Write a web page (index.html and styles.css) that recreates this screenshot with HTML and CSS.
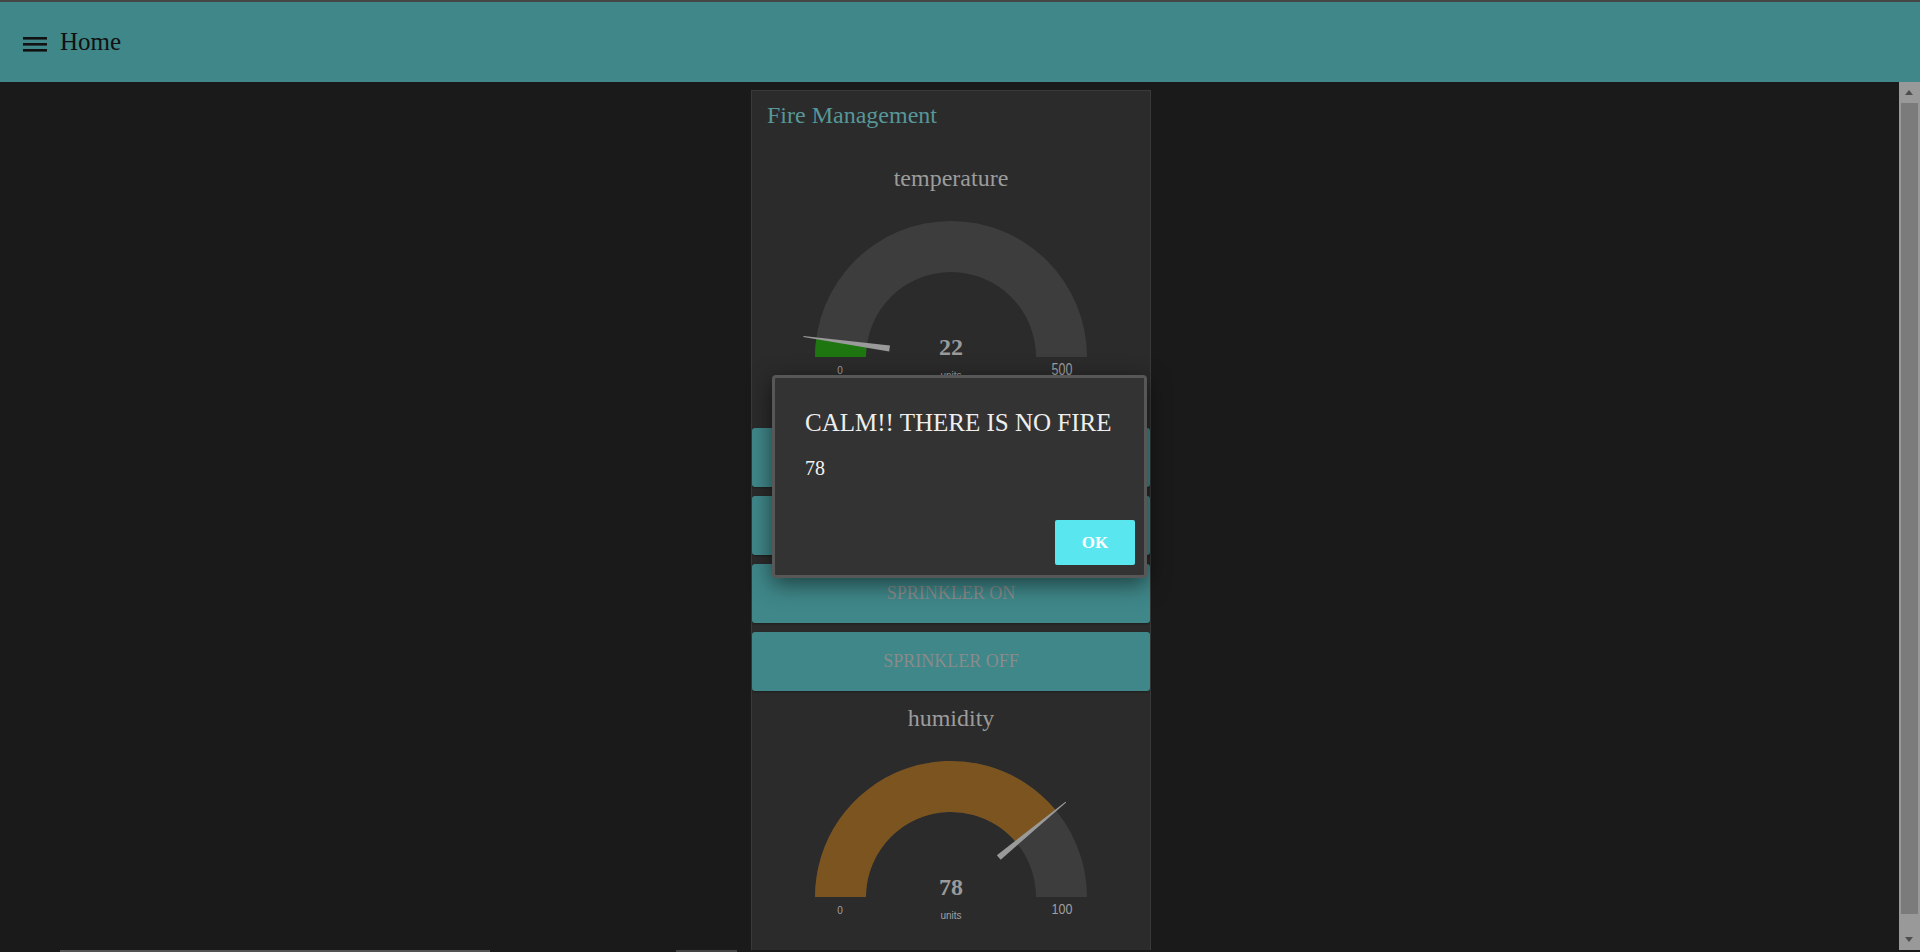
FILE: index.html
```html
<!DOCTYPE html>
<html lang="en">
<head>
<meta charset="utf-8">
<title>Home</title>
<link rel="stylesheet" href="styles.css">
</head>
<body>
<header class="topbar">
  <svg class="menu-icon" width="24" height="15" viewBox="0 0 24 15" aria-hidden="true">
    <rect x="0" y="0" width="24" height="2.6" fill="#111"/>
    <rect x="0" y="6" width="24" height="2.6" fill="#111"/>
    <rect x="0" y="12" width="24" height="2.6" fill="#111"/>
  </svg>
  <span class="topbar-title">Home</span>
</header>

<div class="workspace">
  <main class="content">
    <section class="card">
      <h2 class="card-title">Fire Management</h2>

      <div class="gauge gauge-first">
        <div class="gauge-label">temperature</div>
        <svg class="gauge-svg" width="398" height="235" viewBox="0 0 398 235">
          <path d="M 63 164 A 136 136 0 0 1 335 164 L 284 164 A 85 85 0 0 0 114 164 Z" fill="#3d3d3d"/>
          <path d="M 63 164 A 136 136 0 0 1 64.30 145.26 L 114.81 152.29 A 85 85 0 0 0 114 164 Z" fill="#1d760f"/>
          <path d="M 137.18 158.43 L 138.00 152.49 L 51.49 142.98 L 51.35 143.97 Z" fill="#9a9a9a"/>
          <text class="g-value" x="199" y="162">22</text>
          <text class="g-min" x="88" y="181">0</text>
          <text class="g-max" transform="translate(310 182) scale(1 1.3)">500</text>
          <text class="g-units" x="199" y="186">units</text>
        </svg>
      </div>

      <div class="buttons">
        <div class="btn">BUZZER ON</div>
        <div class="btn">BUZZER OFF</div>
        <div class="btn">SPRINKLER ON</div>
        <div class="btn">SPRINKLER OFF</div>
      </div>

      <div class="gauge gauge-second">
        <div class="gauge-label">humidity</div>
        <svg class="gauge-svg" width="398" height="235" viewBox="0 0 398 235">
          <path d="M 63 164 A 136 136 0 0 1 335 164 L 284 164 A 85 85 0 0 0 114 164 Z" fill="#3d3d3d"/>
          <path d="M 63 164 A 136 136 0 0 1 303.79 77.31 L 264.49 109.82 A 85 85 0 0 0 114 164 Z" fill="#7c5420"/>
          <path d="M 248.68 126.79 L 244.86 122.17 L 313.48 68.64 L 314.12 69.42 Z" fill="#9a9a9a"/>
          <text class="g-value" x="199" y="162">78</text>
          <text class="g-min" x="88" y="181">0</text>
          <text class="g-max" transform="translate(310 181) scale(1 1.15)">100</text>
          <text class="g-units" x="199" y="186">units</text>
        </svg>
      </div>
    </section>
  </main>
  <div class="scrollbar" aria-hidden="true">
    <div class="sb-arrow sb-up"></div>
    <div class="sb-thumb"></div>
    <div class="sb-arrow sb-down"></div>
  </div>
</div>

<div class="bottom-strip" aria-hidden="true">
  <span class="strip-seg seg-a"></span>
  <span class="strip-seg seg-b"></span>
</div>

<div class="dialog" role="dialog">
  <div class="dialog-title">CALM!! THERE IS NO FIRE</div>
  <div class="dialog-msg">78</div>
  <div class="dialog-actions">
    <button class="dialog-ok">OK</button>
  </div>
</div>
</body>
</html>
```

FILE: styles.css
```css
html, body {
  margin: 0;
  padding: 0;
}
body {
  width: 1920px;
  height: 952px;
  overflow: hidden;
  background: #1a1a1a;
  font-family: "Liberation Serif", "Times New Roman", serif;
  display: flex;
  flex-direction: column;
  position: relative;
}

.topbar {
  flex: 0 0 auto;
  height: 80px;
  border-top: 2px solid #474747;
  background: #3f8789;
  display: flex;
  align-items: center;
  padding-left: 23px;
  gap: 13px;
}
.menu-icon {
  display: block;
  margin-top: 4px;
}
.topbar-title {
  font-size: 25px;
  color: #111;
}

.workspace {
  flex: 1 1 auto;
  display: flex;
  min-height: 0;
}
.content {
  flex: 1 1 auto;
  display: flex;
  justify-content: center;
  padding-top: 8px;
  padding-left: 3px;
  overflow: hidden;
}

.card {
  width: 398px;
  border: 1px solid #3a3a3a;
  border-bottom: none;
  background: #2b2b2b;
  padding-top: 10px;
  box-sizing: content-box;
  display: flex;
  flex-direction: column;
}
.card-title {
  margin: 0;
  font-weight: normal;
  font-size: 24px;
  line-height: 29px;
  height: 29px;
  color: #579799;
  padding-left: 15px;
}

.gauge-first {
  margin-top: 34px;
  height: 264px;
}
.gauge-second {
  margin-top: 13px;
}
.gauge-label {
  font-size: 24px;
  line-height: 29px;
  height: 29px;
  text-align: center;
  color: #9c9c9c;
}
.gauge-svg {
  display: block;
}
.g-value {
  font-family: "Liberation Serif", "Times New Roman", serif;
  font-weight: bold;
  font-size: 24px;
  fill: #9a9a9a;
  text-anchor: middle;
}
.g-min, .g-max, .g-units {
  font-family: "Liberation Sans", Arial, sans-serif;
  fill: #a0a0a0;
  text-anchor: middle;
}
.g-min {
  font-size: 10px;
}
.g-max {
  font-size: 12.5px;
}
.g-units {
  font-size: 10px;
}

.buttons {
  display: flex;
  flex-direction: column;
  gap: 9px;
}
.btn {
  height: 59px;
  background: #3f8789;
  border-radius: 3px;
  display: flex;
  align-items: center;
  justify-content: center;
  font-size: 18px;
  color: #8b8b8b;
  box-shadow: 0 1px 2px rgba(0, 0, 0, 0.3);
}

.scrollbar {
  flex: 0 0 21px;
  width: 21px;
  background: #999999;
  display: flex;
  flex-direction: column;
  align-items: center;
}
.sb-arrow {
  flex: 0 0 21px;
  height: 21px;
  width: 21px;
  position: relative;
}
.sb-up::after, .sb-down::after {
  content: "";
  position: absolute;
  left: 6px;
  width: 0;
  height: 0;
  border-left: 4.5px solid transparent;
  border-right: 4.5px solid transparent;
}
.sb-up::after {
  top: 8px;
  border-bottom: 5px solid #4e4e4e;
}
.sb-down::after {
  bottom: 8px;
  border-top: 5px solid #4e4e4e;
}
.sb-thumb {
  width: 17px;
  flex: 1 1 auto;
  background: #7b7b7b;
  margin-bottom: 15px;
}

.bottom-strip {
  flex: 0 0 2px;
  height: 2px;
  background: #1a1a1a;
  display: flex;
}
.strip-seg {
  display: block;
  height: 2px;
}
.seg-a {
  margin-left: 60px;
  width: 430px;
  background: #555;
}
.seg-b {
  margin-left: 186px;
  width: 61px;
  background: #444;
}

.dialog {
  position: absolute;
  left: 772px;
  top: 375px;
  border: 3px solid #575757;
  border-radius: 4px;
  background: #333333;
  box-shadow: 0 6px 22px rgba(0, 0, 0, 0.55);
  display: flex;
  flex-direction: column;
  padding: 30px 9px 10px 30px;
  box-sizing: content-box;
  width: 330px;
  height: 157px;
}
.dialog-title {
  font-size: 25px;
  line-height: 30px;
  color: #eeeeee;
  white-space: nowrap;
}
.dialog-msg {
  margin-top: 18px;
  font-size: 20px;
  line-height: 24px;
  color: #f2f2f2;
}
.dialog-actions {
  margin-top: auto;
  display: flex;
  justify-content: flex-end;
}
.dialog-ok {
  width: 80px;
  height: 45px;
  border: none;
  border-radius: 2px;
  background: #5ae6ee;
  color: #ffffff;
  font-family: "Liberation Serif", "Times New Roman", serif;
  font-weight: bold;
  font-size: 17px;
  padding: 0;
}
```
